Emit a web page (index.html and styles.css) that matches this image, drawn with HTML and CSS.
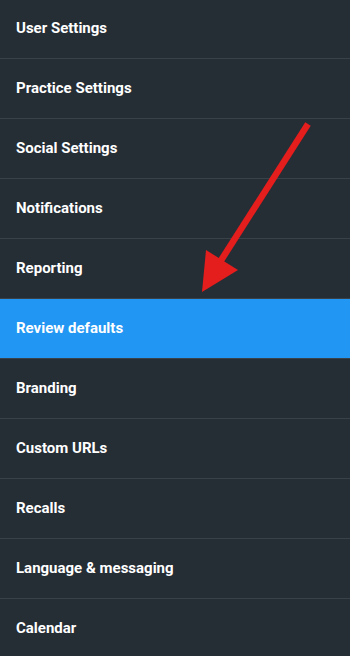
FILE: index.html
```html
<!DOCTYPE html>
<html lang="en">
<head>
  <meta charset="UTF-8">
  <meta name="viewport" content="width=device-width, initial-scale=1.0">
  <title>Settings</title>
  <link rel="stylesheet" href="styles.css">
</head>
<body>
  <div id="sidebar">
    <ul class="menu">
      <li class="menu-item">User Settings</li>
      <li class="menu-item">Practice Settings</li>
      <li class="menu-item">Social Settings</li>
      <li class="menu-item">Notifications</li>
      <li class="menu-item">Reporting</li>
      <li class="menu-item active">Review defaults</li>
      <li class="menu-item">Branding</li>
      <li class="menu-item">Custom URLs</li>
      <li class="menu-item">Recalls</li>
      <li class="menu-item">Language &amp; messaging</li>
      <li class="menu-item">Calendar</li>
    </ul>

    <!-- annotation arrow pointing at the active item -->
    <svg class="arrow" width="350" height="656" viewBox="0 0 350 656">
      <line x1="308" y1="124" x2="220" y2="262" stroke="#e41d1d" stroke-width="6.5"/>
      <polygon points="206,250 238,270 202,292" fill="#e41d1d"/>
    </svg>
  </div>
</body>
</html>
```

FILE: styles.css
```css
body {
  margin: 0;
  background-color: #252d35;
  font-family: 'Roboto', 'Liberation Sans', sans-serif;
  color: white;
}

#sidebar {
  position: relative;
  width: 350px;
  height: 656px;
  overflow: hidden;
}

.menu {
  list-style: none;
  margin: -1px 0 0 0;
  padding: 0;
}

.menu-item {
  display: flex;
  align-items: center;
  height: 57px;
  padding: 0 16px 2px;
  border-bottom: 1px solid #3a4249;
  font-size: 15px;
  font-weight: bold;
}

.menu-item.active {
  background-color: #2196f3;
}

.arrow {
  position: absolute;
  top: 0;
  left: 0;
  pointer-events: none;
}
```
